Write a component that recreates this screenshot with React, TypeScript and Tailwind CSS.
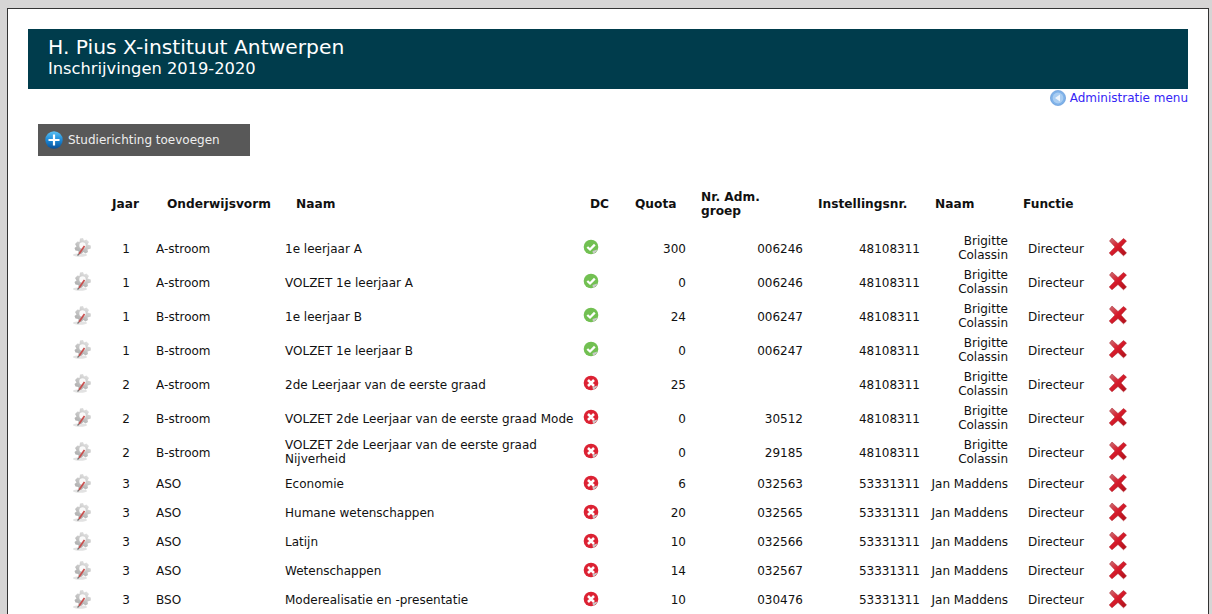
import React from "react"

const rows = [
  { jaar: "1", vorm: "A-stroom", naam: "1e leerjaar A", ok: true, quota: "300", adm: "006246", inst: "48108311", dir: "Brigitte Colassin" },
  { jaar: "1", vorm: "A-stroom", naam: "VOLZET 1e leerjaar A", ok: true, quota: "0", adm: "006246", inst: "48108311", dir: "Brigitte Colassin" },
  { jaar: "1", vorm: "B-stroom", naam: "1e leerjaar B", ok: true, quota: "24", adm: "006247", inst: "48108311", dir: "Brigitte Colassin" },
  { jaar: "1", vorm: "B-stroom", naam: "VOLZET 1e leerjaar B", ok: true, quota: "0", adm: "006247", inst: "48108311", dir: "Brigitte Colassin" },
  { jaar: "2", vorm: "A-stroom", naam: "2de Leerjaar van de eerste graad", ok: false, quota: "25", adm: "", inst: "48108311", dir: "Brigitte Colassin" },
  { jaar: "2", vorm: "B-stroom", naam: "VOLZET 2de Leerjaar van de eerste graad Mode", ok: false, quota: "0", adm: "30512", inst: "48108311", dir: "Brigitte Colassin" },
  { jaar: "2", vorm: "B-stroom", naam: "VOLZET 2de Leerjaar van de eerste graad Nijverheid", ok: false, quota: "0", adm: "29185", inst: "48108311", dir: "Brigitte Colassin" },
  { jaar: "3", vorm: "ASO", naam: "Economie", ok: false, quota: "6", adm: "032563", inst: "53331311", dir: "Jan Maddens" },
  { jaar: "3", vorm: "ASO", naam: "Humane wetenschappen", ok: false, quota: "20", adm: "032565", inst: "53331311", dir: "Jan Maddens" },
  { jaar: "3", vorm: "ASO", naam: "Latijn", ok: false, quota: "10", adm: "032566", inst: "53331311", dir: "Jan Maddens" },
  { jaar: "3", vorm: "ASO", naam: "Wetenschappen", ok: false, quota: "14", adm: "032567", inst: "53331311", dir: "Jan Maddens" },
  { jaar: "3", vorm: "BSO", naam: "Moderealisatie en -presentatie", ok: false, quota: "10", adm: "030476", inst: "53331311", dir: "Jan Maddens" },
]

function GearIcon() {
  return (
    <svg width="20" height="20" viewBox="0 0 20 20" className="block">
      <defs>
        <linearGradient id="gearfill" x1="0.8" y1="0" x2="0.2" y2="1">
          <stop offset="0" stopColor="#e6e6e6" />
          <stop offset="1" stopColor="#a8a8a8" />
        </linearGradient>
      </defs>
      <ellipse cx="8" cy="18" rx="7" ry="1.7" fill="#e2e2e2" />
      <path
        d="M8 1.5 L11 1 L12 3.5 L14.5 2.5 L17 5 L15.5 7.5 L18.8 8.5 L18.8 11.5 L15.5 12.5 L16 15 L13.5 16.5 L11.5 15 L9 17 L6.5 16 L6.5 14 L3.5 13.5 L2.5 11 L4.5 9.5 L3 7 L5.5 4.5 L7.5 5 Z"
        fill="url(#gearfill)"
      />
      <circle cx="10.5" cy="8.5" r="3.2" fill="#fafafa" />
      <path d="M12.5 9 L7 17" stroke="#c8504f" strokeWidth="1.7" />
      <path d="M7 17 L5.5 18.5" stroke="#777" strokeWidth="1.2" />
    </svg>
  )
}

function OkIcon() {
  return (
    <svg width="16" height="16" viewBox="0 0 16 16" className="block">
      <circle cx="8" cy="8" r="7.3" fill="#72c052" />
      <path d="M14.5 10.5 A7.3 7.3 0 0 1 10 15 L9.5 12 Z" fill="#c9c9c9" />
      <path d="M4.3 8 L7 10.5 L11.8 5.6" fill="none" stroke="#fff" strokeWidth="2.3" />
    </svg>
  )
}

function NoIcon() {
  return (
    <svg width="16" height="16" viewBox="0 0 16 16" className="block">
      <circle cx="8" cy="8" r="7.3" fill="#dc2233" />
      <path d="M14.5 10.5 A7.3 7.3 0 0 1 10 15 L9.5 12 Z" fill="#c9c9c9" />
      <path d="M5 5 L11 11 M11 5 L5 11" fill="none" stroke="#fff" strokeWidth="2.5" />
    </svg>
  )
}

function DeleteIcon() {
  return (
    <svg width="20" height="20" viewBox="0 0 20 20" className="block">
      <defs>
        <linearGradient id="xred" x1="0" y1="0" x2="1" y2="1">
          <stop offset="0" stopColor="#c9757a" />
          <stop offset="0.45" stopColor="#d81c2c" />
          <stop offset="1" stopColor="#ad1019" />
        </linearGradient>
      </defs>
      <path
        d="M4 1 L10 6.5 L15.5 1.5 L18.5 4 L13 10 L18.5 16 L15.5 18.8 L10 13.5 L4 18.8 L1.2 16 L7 10 L1.5 4 Z"
        fill="url(#xred)"
        stroke="#a81a24"
        strokeWidth="0.5"
      />
    </svg>
  )
}

function PlusIcon() {
  return (
    <svg width="18" height="18" viewBox="0 0 18 18" className="block">
      <defs>
        <linearGradient id="plusblue" x1="0" y1="0" x2="0" y2="1">
          <stop offset="0" stopColor="#5cc0f2" />
          <stop offset="0.5" stopColor="#1c8ad8" />
          <stop offset="1" stopColor="#0a4f96" />
        </linearGradient>
      </defs>
      <circle cx="9" cy="9" r="8.7" fill="url(#plusblue)" />
      <path d="M9 3.5 V14.5 M3.5 9 H14.5" stroke="#fff" strokeWidth="2.2" />
    </svg>
  )
}

function BackIcon() {
  return (
    <svg width="16" height="16" viewBox="0 0 16 16" className="block">
      <circle cx="8" cy="8" r="7.6" fill="#7fb2e8" stroke="#5c94d6" strokeWidth="0.6" />
      <circle cx="8" cy="8" r="5.4" fill="#a9cdf2" />
      <path d="M10 4.5 V11.5 L5 8 Z" fill="#eef5fd" />
    </svg>
  )
}

export default function App() {
  return (
    <div className="h-[614px] overflow-hidden bg-[#d6d5d5] pt-2 pl-[7px] pr-[3px] font-['DejaVu_Sans',sans-serif] text-[12px] leading-[14px] text-[#111]">
      <div className="h-[700px] border border-[#333] bg-white pt-5 px-5">
        <div className="h-[60px] bg-[#003c4c] pl-5 pt-[7px] text-white">
          <div className="text-[20.3px] leading-[22px]">H. Pius X-instituut Antwerpen</div>
          <div className="mt-px text-[16.3px] leading-[20px]">Inschrijvingen 2019-2020</div>
        </div>

        <div className="flex justify-end">
          <a href="#" className="flex h-[18px] items-center gap-1 text-[#3525f5]">
            <BackIcon />
            Administratie menu
          </a>
        </div>

        <button className="mt-[17px] ml-[10px] flex h-8 w-[212px] items-center gap-[5px] bg-[#585858] pl-[7px] text-[#eee]">
          <PlusIcon />
          Studierichting toevoegen
        </button>

        <table className="mt-5 ml-[10px] table-fixed border-collapse" style={{ width: 1110 }}>
          <colgroup>
            <col className="w-[66px]" />
            <col className="w-[44px]" />
            <col className="w-[130px]" />
            <col className="w-[304px]" />
            <col className="w-[35px]" />
            <col className="w-[77px]" />
            <col className="w-[117px]" />
            <col className="w-[116px]" />
            <col className="w-[89px]" />
            <col className="w-[75px]" />
            <col className="w-[57px]" />
          </colgroup>
          <thead>
            <tr className="h-[55px] text-left text-[12.2px] font-bold">
              <th />
              <th className="pl-2">Jaar</th>
              <th className="pl-[19px]">Onderwijsvorm</th>
              <th className="pl-[18px]">Naam</th>
              <th className="pl-2">DC</th>
              <th className="pl-[18px]">Quota</th>
              <th className="pl-[7px]">Nr. Adm.<br />groep</th>
              <th className="pl-[7px]">Instellingsnr.</th>
              <th className="pl-2">Naam</th>
              <th className="pl-[7px]">Functie</th>
              <th />
            </tr>
          </thead>
          <tbody>
            {rows.map((r, i) => (
              <tr key={i} className={i < 7 ? "h-[34px]" : "h-[29px]"}>
                <td className="pl-[34px]"><div className="-mt-[2px]"><GearIcon /></div></td>
                <td className={i < 7 ? "pt-[2px] text-center" : "text-center"}>{r.jaar}</td>
                <td className={i < 7 ? "pt-[2px] pl-2" : "pl-2"}>{r.vorm}</td>
                <td className={i < 6 ? "pt-[2px] pl-[7px]" : "pl-[7px]"}>{r.naam}</td>
                <td><div className="ml-[1px] -mt-[2px]">{r.ok ? <OkIcon /> : <NoIcon />}</div></td>
                <td className={i < 7 ? "pt-[2px] pr-2 text-right" : "pr-2 text-right"}>{r.quota}</td>
                <td className={i < 7 ? "pt-[2px] pr-2 text-right" : "pr-2 text-right"}>{r.adm}</td>
                <td className={i < 7 ? "pt-[2px] pr-[7px] text-right" : "pr-[7px] text-right"}>{r.inst}</td>
                <td className="pr-2 text-right">{r.dir}</td>
                <td className={i < 7 ? "pt-[2px] pl-3" : "pl-3"}>Directeur</td>
                <td className="pl-[17px]"><div className="-mt-[2px]"><DeleteIcon /></div></td>
              </tr>
            ))}
          </tbody>
        </table>
      </div>
    </div>
  )
}
